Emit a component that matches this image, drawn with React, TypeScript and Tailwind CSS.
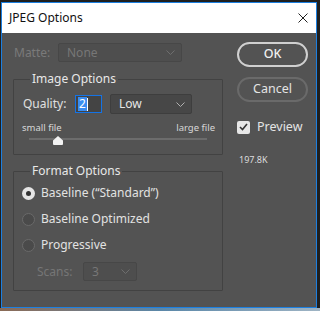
function Chevron({ color }: { color: string }) {
  return (
    <svg width="9" height="5" viewBox="0 0 9 5" fill="none" stroke={color} strokeWidth={1}>
      <path d="M0.5 0.5 L4.5 4.5 L8.5 0.5" />
    </svg>
  );
}

function Radio({ checked, label }: { checked?: boolean; label: string }) {
  return (
    <div className="flex items-center h-[20px]">
      <div
        className={`w-[13px] h-[13px] rounded-full flex items-center justify-center ${
          checked ? "bg-[#e6e6e6]" : "bg-[#4a4a4a] border border-[#6a6a6a]"
        }`}
      >
        {checked && <div className="w-[5px] h-[5px] rounded-full bg-[#333]" />}
      </div>
      <span className="ml-[6px] text-[12px] text-[#e2e2e2]">{label}</span>
    </div>
  );
}

export default function App() {
  return (
    <div
      className="w-[320px] h-[311px] bg-[#1f1f1f] flex flex-col overflow-hidden"
      style={{ fontFamily: '"Noto Sans", "Open Sans", sans-serif' }}
    >
      <div className="ml-[1px] mt-[2px] w-[316px] h-[306px] border border-[#1c7fe0] flex flex-col">
        {/* title bar */}
        <div className="h-[30px] bg-white flex items-center justify-between pl-[7px] pr-[8px] shrink-0">
          <span className="text-[12px] text-[#111] leading-none">JPEG Options</span>
          <svg width="10" height="10" viewBox="0 0 10 10" stroke="#222" strokeWidth={1}>
            <path d="M0.5 0.5 L9.5 9.5 M9.5 0.5 L0.5 9.5" />
          </svg>
        </div>

        {/* body */}
        <div className="flex-1 bg-[#535353] flex">
          <div className="pl-[11px] w-[221px] flex flex-col">
            {/* matte */}
            <div className="mt-[10px] h-[19px] flex items-center">
              <span className="pl-[1px] w-[45px] text-[12px] text-[#7a7a7a]">Matte:</span>
              <div className="w-[124px] h-[19px] bg-[#4e4e4e] border border-[#474747] rounded-[2px] flex items-center justify-between pl-[8px] pr-[6px]">
                <span className="text-[12px] text-[#777]">None</span>
                <Chevron color="#6e6e6e" />
              </div>
            </div>

            {/* image options */}
            <fieldset className="mt-[9px] h-[84px] w-[210px] border border-[#424242] rounded-[1px]">
              <legend className="ml-[16px] px-[2px] text-[12px] leading-[16px] text-[#e8e8e8]">
                Image Options
              </legend>
              <div className="mt-[7px] h-[20px] flex items-center pl-[9px]">
                <span className="w-[52px] text-[12px] text-[#e0e0e0]">Quality:</span>
                <div className="w-[27px] h-[18px] border border-[#1473e6] bg-[#444] flex items-center pl-[2px]">
                  <span className="bg-[#3b8df0] text-white text-[12px] leading-[14px] px-[1px]">2</span>
                  <span className="w-[1px] h-[13px] bg-white" />
                </div>
                <div className="ml-[8px] w-[82px] h-[20px] bg-[#474747] border border-[#3e3e3e] rounded-[2px] flex items-center justify-between pl-[8px] pr-[6px]">
                  <span className="text-[12px] text-[#e6e6e6]">Low</span>
                  <Chevron color="#b0b0b0" />
                </div>
              </div>
              <div className="mt-[8px] flex justify-between pl-[8px] pr-[7px] text-[9.5px] leading-[12px] text-[#d8d8d8]">
                <span>small file</span>
                <span>large file</span>
              </div>
              <div className="relative mt-[4px] ml-[15px] w-[178px] h-[2px] bg-[#6c6c6c]">
                <svg
                  className="absolute left-[24px] top-[-2px]"
                  width="10"
                  height="9"
                  viewBox="0 0 10 9"
                >
                  <path d="M5 0 L10 4.5 L10 8 Q10 9 9 9 L1 9 Q0 9 0 8 L0 4.5 Z" fill="#f2f2f2" />
                </svg>
              </div>
            </fieldset>

            {/* format options */}
            <fieldset className="mt-[8px] h-[128px] w-[210px] border border-[#424242] rounded-[1px]">
              <legend className="ml-[16px] px-[2px] text-[12px] leading-[16px] text-[#e8e8e8]">
                Format Options
              </legend>
              <div className="mt-[4px] pl-[8px] flex flex-col gap-[6px]">
                <Radio checked label={"Baseline (\u201cStandard\u201d)"} />
                <Radio label="Baseline Optimized" />
                <Radio label="Progressive" />
              </div>
              <div className="mt-[7px] h-[19px] flex items-center pl-[23px]">
                <span className="w-[46px] text-[12px] text-[#767676]">Scans:</span>
                <div className="w-[54px] h-[19px] bg-[#4e4e4e] border border-[#474747] rounded-[2px] flex items-center justify-between pl-[8px] pr-[6px]">
                  <span className="text-[12px] text-[#777]">3</span>
                  <Chevron color="#6e6e6e" />
                </div>
              </div>
            </fieldset>
          </div>

          {/* buttons */}
          <div className="ml-[14px] flex flex-col">
            <button className="mt-[9px] w-[71px] h-[25px] rounded-full border-2 border-[#d0d0d0] text-[12.5px] font-medium text-[#f0f0f0]">
              OK
            </button>
            <button className="mt-[10px] w-[71px] h-[25px] rounded-full border-2 border-[#6a6a6a] text-[12.5px] text-[#e4e4e4]">
              Cancel
            </button>
            <div className="mt-[16px] flex items-center">
              <div className="w-[13px] h-[13px] rounded-[2px] bg-[#e6e6e6] flex items-center justify-center">
                <svg width="9" height="8" viewBox="0 0 9 8" fill="none" stroke="#333" strokeWidth={1.6}>
                  <path d="M1 4 L3.5 6.5 L8 1" />
                </svg>
              </div>
              <span className="ml-[7px] text-[12.5px] text-[#e4e4e4]">Preview</span>
            </div>
            <span className="mt-[17px] ml-[2px] text-[9px] leading-[12px] text-[#dcdcdc]">197.8K</span>
          </div>
        </div>
      </div>
      <div className="flex-1 bg-gradient-to-r from-[#8a6a55] via-[#5a87a8] to-[#9fb4c4]" />
    </div>
  );
}
